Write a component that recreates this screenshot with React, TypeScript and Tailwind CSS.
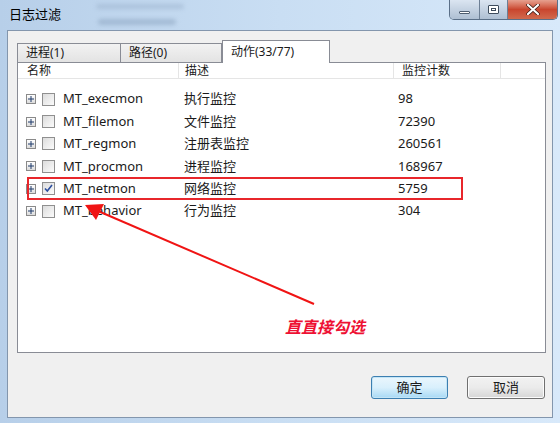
import React from "react";

type Row = { name: string; desc: string; count: string; checked?: boolean };

const rows: Row[] = [
  { name: "MT_execmon", desc: "执行监控", count: "98" },
  { name: "MT_filemon", desc: "文件监控", count: "72390" },
  { name: "MT_regmon", desc: "注册表监控", count: "260561" },
  { name: "MT_procmon", desc: "进程监控", count: "168967" },
  { name: "MT_netmon", desc: "网络监控", count: "5759", checked: true },
  { name: "MT_behavior", desc: "行为监控", count: "304" },
];

const font = { fontFamily: '"Noto Sans", "Noto Sans CJK SC", sans-serif' };

function PlusBox() {
  return (
    <span className="flex h-[10px] w-[10px] items-center justify-center border border-[#8a8a8a] bg-gradient-to-b from-white to-[#dcdcdc]">
      <svg width="6" height="6" viewBox="0 0 6 6">
        <path d="M0 3h6M3 0v6" stroke="#1f3b6a" strokeWidth="1" />
      </svg>
    </span>
  );
}

function CheckBox({ checked }: { checked?: boolean }) {
  return (
    <span className="flex h-[13px] w-[13px] items-center justify-center border border-[#8f8f8f] bg-gradient-to-br from-[#dcdcdc] to-[#fbfbfb]">
      {checked && (
        <svg width="9" height="9" viewBox="0 0 9 9">
          <path d="M1 4.5l2.3 2.5L8 1" fill="none" stroke="#2d4f9e" strokeWidth="1.6" />
        </svg>
      )}
    </span>
  );
}

export default function App() {
  return (
    <div
      className="relative h-[423px] w-[560px] overflow-hidden bg-gradient-to-r from-[#b7cfe9] via-[#c9def3] to-[#d8e9fa] text-[#1a1a1a]"
      style={font}
    >
      {/* title bar */}
      <div className="relative flex h-[30px] items-start">
        <span className="pl-[9px] pt-[6px] text-[13px] leading-[16px] text-black">日志过滤</span>
        {/* blurred window behind the glass */}
        <div className="pointer-events-none absolute left-[96px] top-[4px] h-[5px] w-[88px] rounded-full bg-[#9fb6d0] opacity-60 blur-[2px]" />
        <div className="pointer-events-none absolute left-[98px] top-[19px] h-[6px] w-[78px] rounded-full bg-[#8fa7c3] opacity-60 blur-[2px]" />
        <div className="ml-auto mr-[2px] flex h-[20px] overflow-hidden rounded-b-[5px] border border-t-0 border-[#5a6f88]">
          <div className="flex w-[30px] items-center justify-center border-r border-[#6d7f95] bg-gradient-to-b from-[#dbe5f1] to-[#aebfd3]">
            <span className="mt-[5px] h-[3px] w-[11px] rounded-[1px] border border-[#4d5d70] bg-white" />
          </div>
          <div className="flex w-[28px] items-center justify-center border-r border-[#6d7f95] bg-gradient-to-b from-[#dbe5f1] to-[#aebfd3]">
            <span className="flex h-[9px] w-[11px] items-center justify-center rounded-[1px] border border-[#3d4b5c] bg-white">
              <span className="h-[3px] w-[5px] border border-[#3d4b5c]" />
            </span>
          </div>
          <div className="flex w-[49px] items-center justify-center bg-gradient-to-b from-[#e6a08f] via-[#c9452e] to-[#d0694d]">
            <svg width="14" height="11" viewBox="0 0 14 11">
              <path d="M2 1l10 9M12 1L2 10" stroke="#3a1a14" strokeWidth="3.6" strokeLinecap="round" />
              <path d="M2 1l10 9M12 1L2 10" stroke="#ffffff" strokeWidth="2.2" strokeLinecap="round" />
            </svg>
          </div>
        </div>
      </div>

      {/* client area */}
      <div className="mx-[7px] flex h-[388px] flex-col border border-[#8396ad] bg-[#f0f0f0] pl-[9px] pr-[6px] pt-[9px]">
        {/* tabs */}
        <div className="flex h-[22px] items-end text-[12px]">
          <div className="flex h-[19px] w-[104px] items-center border border-b-0 border-[#898c95] bg-gradient-to-b from-[#f2f2f2] to-[#e3e3e3] pl-[8px]">
            进程(1)
          </div>
          <div className="flex h-[19px] w-[101px] items-center border border-b-0 border-l-0 border-[#898c95] bg-gradient-to-b from-[#f2f2f2] to-[#e3e3e3] pl-[8px]">
            路径(0)
          </div>
          <div className="relative z-10 -mb-px flex h-[23px] w-[108px] items-center border border-b-0 border-[#898c95] bg-white pl-[8px]">
            动作(33/77)
          </div>
        </div>

        {/* list view */}
        <div className="relative h-[291px] border border-[#898c95] bg-white text-[12px]">
          <div className="grid h-[16px] grid-cols-[161px_215px_107px_1fr] border-b border-[#e5e5e5] leading-[15px]">
            <div className="border-r border-[#e5e5e5] pl-[9px]">名称</div>
            <div className="border-r border-[#e5e5e5] pl-[6px]">描述</div>
            <div className="border-r border-[#e5e5e5] pl-[8px]">监控计数</div>
            <div />
          </div>
          <div className="pt-[9px]">
            {rows.map((r) => (
              <div key={r.name} className="grid h-[22.4px] grid-cols-[161px_215px_1fr] items-center">
                <div className="flex items-center pl-[8px]">
                  <PlusBox />
                  <span className="ml-[6px]">
                    <CheckBox checked={r.checked} />
                  </span>
                  <span className="ml-[8px] text-[13px]">{r.name}</span>
                </div>
                <div className="pl-[5px] text-[13px]">{r.desc}</div>
                <div className="pl-[4px] text-[13px]">{r.count}</div>
              </div>
            ))}
          </div>
        </div>

        {/* buttons */}
        <div className="mt-[23px] flex justify-end gap-[19px] pr-[1px] text-[13px]">
          <button className="h-[23px] w-[77px] rounded-[3px] border border-[#3c7fb1] bg-gradient-to-b from-[#eaf6fd] via-[#d9f0fc] to-[#a7d9f5] shadow-[inset_0_0_0_1px_#c4e5f6]">
            确定
          </button>
          <button className="h-[23px] w-[78px] rounded-[3px] border border-[#707070] bg-gradient-to-b from-[#f2f2f2] via-[#ebebeb] to-[#d6d6d6] shadow-[inset_0_0_0_1px_#fcfcfc]">
            取消
          </button>
        </div>
      </div>

      {/* annotation overlay */}
      <div className="pointer-events-none absolute left-[27px] top-[177px] h-[23px] w-[436px] border-2 border-[#e8262b]" />
      <svg className="pointer-events-none absolute left-0 top-0" width="560" height="423">
        <line x1="314" y1="304" x2="98" y2="211" stroke="#f01414" strokeWidth="2" />
        <path d="M85 205 L104 204 L96 220 Z" fill="#f01414" />
      </svg>
      <div className="absolute left-[285px] top-[317px] text-[16px] font-bold italic leading-[20px] text-[#ee1133]">
        直直接勾选
      </div>
    </div>
  );
}
